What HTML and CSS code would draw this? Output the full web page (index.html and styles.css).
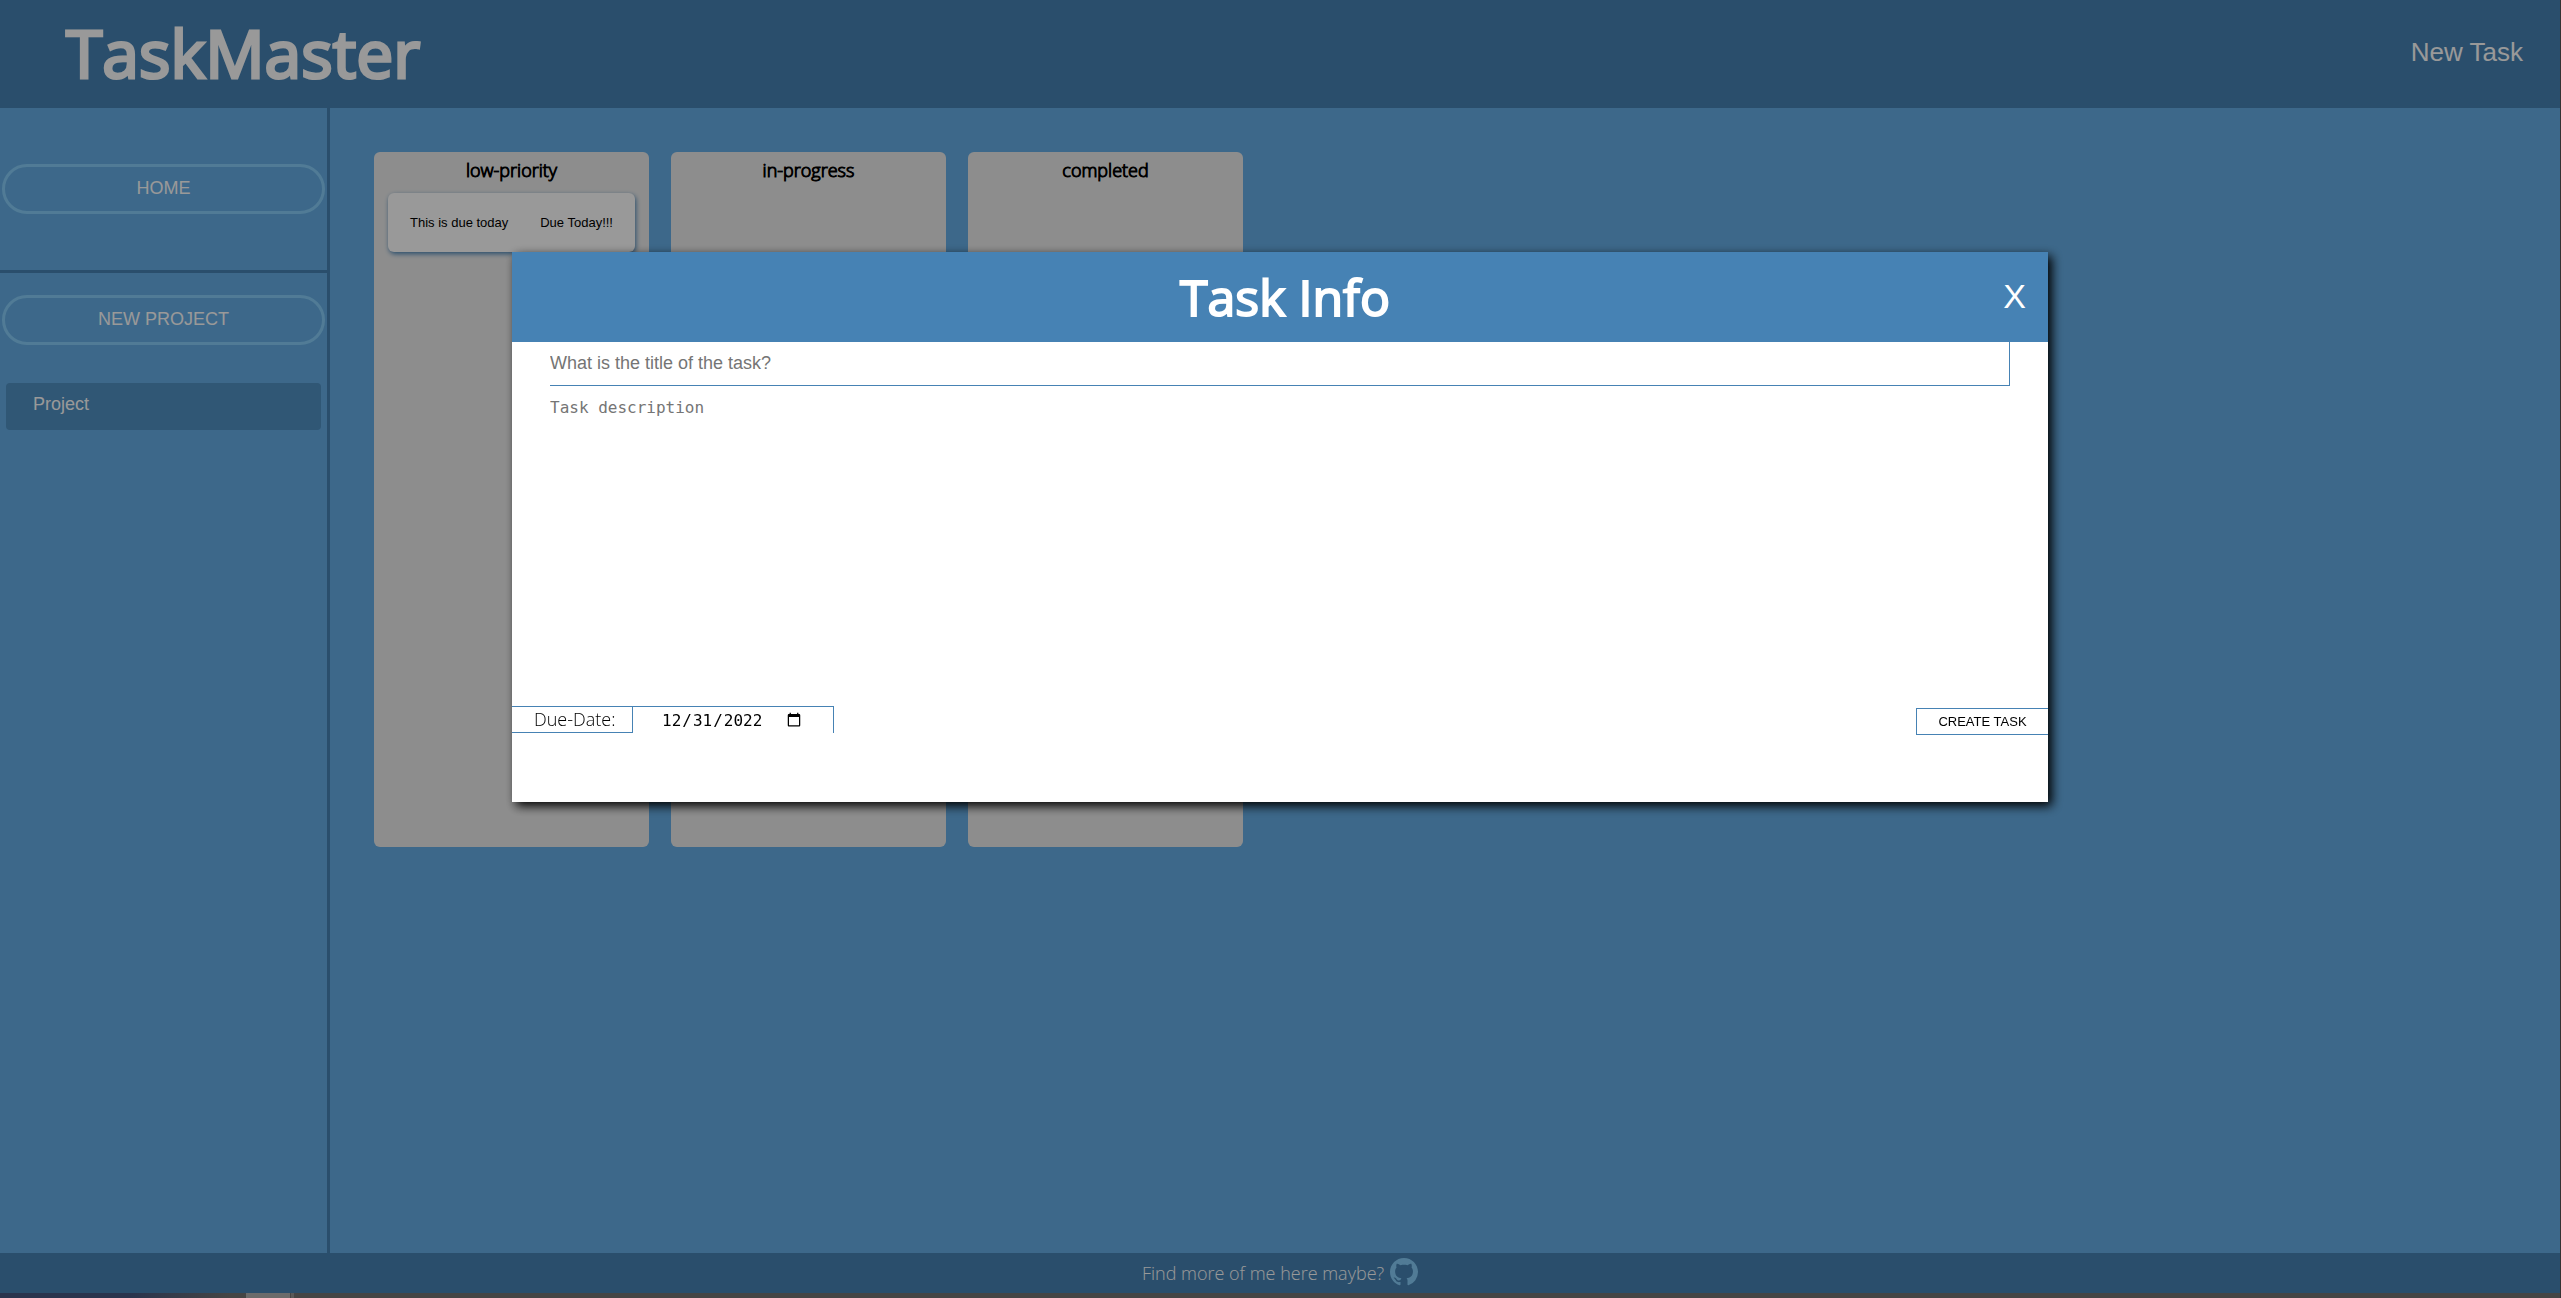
FILE: index.html
```html
<!DOCTYPE html>
<html lang="en">
<head>
<meta charset="utf-8">
<title>TaskMaster</title>
<link rel="stylesheet" href="styles.css">
</head>
<body>
<div class="app">
  <header class="topbar">
    <h1 class="brand">TaskMaster</h1>
    <button class="new-task" type="button">New Task</button>
  </header>
  <div class="workspace">
    <nav class="sidebar">
      <div class="home-area">
        <button class="pill" type="button">HOME</button>
      </div>
      <div class="project-area">
        <button class="pill" type="button">NEW PROJECT</button>
        <button class="project" type="button">Project</button>
      </div>
    </nav>
    <main class="board">
      <section class="column">
        <h2 class="column-title">low-priority</h2>
        <article class="card"><span>This is due today</span><span>Due Today!!!</span></article>
      </section>
      <section class="column">
        <h2 class="column-title">in-progress</h2>
      </section>
      <section class="column">
        <h2 class="column-title">completed</h2>
      </section>
    </main>
  </div>
  <footer class="footer">
    <span>Find more of me here maybe?</span>
    <a class="github" href="#" aria-label="GitHub">
      <svg viewBox="0 0 16 16" width="28" height="28" fill="currentColor" aria-hidden="true"><path d="M8 0C3.58 0 0 3.58 0 8c0 3.54 2.29 6.53 5.47 7.59.4.07.55-.17.55-.38 0-.19-.01-.82-.01-1.49-2.01.37-2.53-.49-2.69-.94-.09-.23-.48-.94-.82-1.13-.28-.15-.68-.52-.01-.53.63-.01 1.08.58 1.23.82.72 1.21 1.87.87 2.33.66.07-.52.28-.87.51-1.07-1.78-.2-3.64-.89-3.64-3.95 0-.87.31-1.59.82-2.15-.08-.2-.36-1.02.08-2.12 0 0 .67-.21 2.2.82.64-.18 1.32-.27 2-.27s1.36.09 2 .27c1.53-1.04 2.2-.82 2.2-.82.44 1.1.16 1.92.08 2.12.51.56.82 1.27.82 2.15 0 3.07-1.87 3.75-3.65 3.95.29.25.54.73.54 1.48 0 1.07-.01 1.93-.01 2.2 0 .21.15.46.55.38A8.01 8.01 0 0 0 16 8c0-4.42-3.58-8-8-8z"/></svg>
    </a>
  </footer>
  <div class="taskbar"><span class="taskbar-active"></span><span class="taskbar-next"></span></div>
</div>
<div class="overlay">
  <form class="modal" role="dialog" aria-labelledby="modal-title">
    <div class="modal-head">
      <h2 class="modal-title" id="modal-title">Task Info</h2>
      <button class="close" type="button">X</button>
    </div>
    <input class="title-input" type="text" placeholder="What is the title of the task?" aria-label="Task title">
    <textarea class="description" placeholder="Task description" aria-label="Task description"></textarea>
    <div class="modal-foot">
      <label class="due-label" for="due">Due-Date:</label>
      <input class="due-input" id="due" type="date" value="2022-12-31">
      <button class="create" type="button">CREATE TASK</button>
    </div>
  </form>
</div>
</body>
</html>
```
FILE: styles.css
```css
* {
  box-sizing: border-box;
}

body {
  margin: 0;
  font-family: "Open Sans", sans-serif;
  font-size: 18px;
  font-weight: 300;
  background: #333;
}

button,
input {
  font-family: "Liberation Sans", Arial, sans-serif;
  font-size: 18px;
}

button {
  border: 0;
  padding: 0;
  background: none;
  color: white;
}

h1,
h2 {
  margin: 0;
  font-weight: 400;
}

.app {
  display: flex;
  flex-direction: column;
  min-height: 100vh;
  margin-right: 1px;
  background: #66aee6;
}

.topbar {
  display: flex;
  align-items: center;
  justify-content: space-between;
  height: 108px;
  padding: 0 37px 4px 66px;
  background: steelblue;
  color: white;
}

.brand {
  font-size: 66px;
  line-height: 104px;
  -webkit-text-stroke: 3px;
}

.new-task {
  font-size: 26px;
}

.workspace {
  display: flex;
  flex: 1;
}

.sidebar {
  flex: 0 0 330px;
  border-right: 3px solid steelblue;
}

.home-area {
  padding: 56px 2px;
  border-bottom: 3px solid steelblue;
}

.project-area {
  padding: 22px 2px;
}

.pill {
  display: block;
  width: 100%;
  height: 50px;
  border: 3px solid lightskyblue;
  border-radius: 25px;
  padding-bottom: 2px;
}

.project {
  display: block;
  width: calc(100% - 8px);
  height: 47px;
  margin: 38px 4px 0;
  padding: 0 27px 4px;
  border-radius: 4px;
  background: #5091c3;
  text-align: left;
}

.board {
  display: flex;
  align-items: flex-start;
  gap: 22px;
  padding: 44px;
}

.column {
  width: 275px;
  height: 695px;
  padding: 6px 14px;
  border-radius: 6px;
  background: #ececec;
}

.column-title {
  font-size: 18px;
  font-weight: 300;
  line-height: 25px;
  text-align: center;
  -webkit-text-stroke: 1px;
}

.card {
  display: flex;
  align-items: center;
  justify-content: space-between;
  height: 59px;
  margin-top: 10px;
  padding: 0 22px;
  border-radius: 6px;
  background: white;
  box-shadow: 1px 2px 5px steelblue;
  font-family: "Liberation Sans", Arial, sans-serif;
  font-size: 13px;
}

.footer {
  display: flex;
  align-items: center;
  justify-content: center;
  gap: 6px;
  height: 40px;
  background: steelblue;
  color: white;
}

.github {
  color: lightskyblue;
  height: 30px;
}

.taskbar {
  position: relative;
  z-index: 2;
  display: flex;
  gap: 1px;
  height: 5px;
  padding-left: 246px;
  background: linear-gradient(90deg, #2a344d 0, #2a344d 130px, #454545 230px);
}

.taskbar-active {
  width: 44px;
  background: #6b6b6b;
}

.taskbar-next {
  width: 3px;
  background: #595959;
}

.overlay {
  position: fixed;
  inset: 0 1px 0 0;
  z-index: 1;
  display: flex;
  align-items: flex-start;
  justify-content: center;
  padding-top: 252px;
  background: rgba(0, 0, 0, 0.4);
}

.modal {
  display: flex;
  flex-direction: column;
  width: 60%;
  height: 550px;
  background: white;
  box-shadow: 4px 4px 10px black;
}

.modal-head {
  display: grid;
  grid-template-columns: 1fr auto 1fr;
  align-items: center;
  height: 90px;
  padding: 0 22px 0 32px;
  background: steelblue;
  color: white;
}

.modal-title {
  grid-column: 2;
  font-size: 50px;
  line-height: 90px;
  -webkit-text-stroke: 2px;
}

.close {
  justify-self: end;
  padding-bottom: 2px;
  font-size: 34px;
}

.title-input {
  height: 44px;
  margin: 0 38px;
  padding: 0;
  border: 0;
  border-right: 1px solid steelblue;
  border-bottom: 1px solid steelblue;
  outline: 0;
}

.description {
  height: 320px;
  margin: 0 38px;
  padding: 12px 0;
  border: 0;
  outline: 0;
  resize: none;
  font-family: "DejaVu Sans Mono", monospace;
  font-size: 16px;
}

.modal-foot {
  display: flex;
  align-items: flex-start;
}

.due-label {
  width: 121px;
  height: 27px;
  padding-left: 22px;
  border: 1px solid steelblue;
  border-left: 0;
  line-height: 25px;
}

.due-input {
  width: 201px;
  height: 27px;
  padding: 0 29px 0 28px;
  border: 0;
  border-top: 1px solid steelblue;
  border-right: 1px solid steelblue;
  font-family: "DejaVu Sans Mono", monospace;
  font-size: 16px;
}

.create {
  width: 132px;
  height: 27px;
  margin: 2px 0 0 auto;
  border: 1px solid steelblue;
  border-right: 0;
  color: black;
  font-size: 13px;
}
```
